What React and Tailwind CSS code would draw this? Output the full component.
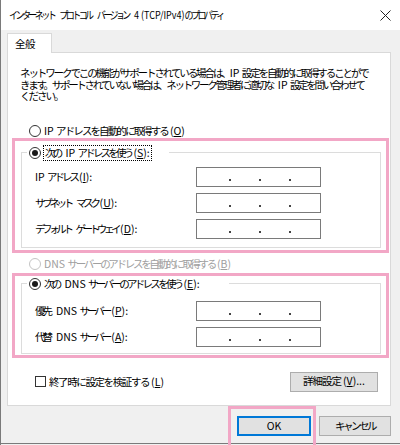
const FONT = "font-['Noto_Sans_CJK_JP','Noto_Sans',sans-serif]";

const Radio = ({ checked, disabled }) => (
  <span
    className={`w-[12px] h-[12px] rounded-full border bg-white flex items-center justify-center shrink-0 ${
      disabled ? 'border-[#c4c4c4]' : 'border-[#333333]'
    }`}
  >
    {checked && <span className="w-[6px] h-[6px] rounded-full bg-[#1a1a1a]" />}
  </span>
);

// latin runs (words, access keys) keep normal spacing
const L = ({ children }) => <span className="tracking-normal">{children}</span>;
// a space after a tightened CJK character
const Sp = ({ w = 'w-[5px]' }) => <span className={`inline-block ${w}`} />;
// access key in parentheses, underlined
const K = ({ k, colon }) => (
  <span className="tracking-normal ml-[2px]">
    (<span className="underline underline-offset-1">{k}</span>){colon ? ':' : ''}
  </span>
);

const IpBox = () => (
  <div className="w-[125px] h-[20px] bg-white border border-[#7a7a7a] flex items-start pt-[11px] pl-[32px] gap-[28px]">
    <span className="w-[2px] h-[2px] bg-[#444444]" />
    <span className="w-[2px] h-[2px] bg-[#444444]" />
    <span className="w-[2px] h-[2px] bg-[#444444]" />
  </div>
);

const Row = ({ label, track }) => (
  <div className="flex items-center h-[20px]">
    <div className={`w-[174px] pl-[13px] whitespace-nowrap ${track}`}>{label}</div>
    <IpBox />
  </div>
);

const Btn = ({ children, primary, className }) => (
  <button
    className={`h-[20px] bg-[#e1e1e1] border flex items-center justify-center leading-none ${
      primary ? 'border-[#0078d7] shadow-[inset_0_0_0_1px_#0078d7]' : 'border-[#adadad]'
    } ${className}`}
  >
    {children}
  </button>
);

export default function App() {
  return (
    <div className={`w-[400px] h-[445px] bg-[#f0f0f0] border-l border-[#7a7a7a] flex flex-col text-black text-[10.5px] ${FONT}`}>
      {/* title bar */}
      <div className="h-[30px] bg-white flex items-center justify-between pl-[8px] pr-[9px] shrink-0">
        <span className="inline-block whitespace-nowrap tracking-[-3px] origin-left scale-x-[0.86]">
          インターネット<Sp w="w-[6px]" />プロトコル<Sp w="w-[6px]" />バージョン<Sp w="w-[6px]" />
          <L>4 (TCP/IPv4)</L>のプロパティ
        </span>
        <svg width="11" height="11" viewBox="0 0 11 11" className="text-[#222]">
          <path d="M0.5 0.5 L10.5 10.5 M10.5 0.5 L0.5 10.5" stroke="currentColor" strokeWidth="1" />
        </svg>
      </div>

      {/* body */}
      <div className="pl-[6px] pt-[3px] flex flex-col">
        <div className="relative z-10 -mb-px w-[45px] h-[20px] bg-white border border-b-0 border-[#d9d9d9] pl-[7px] flex items-center tracking-[-0.5px]">
          全般
        </div>
        <div className="w-[384px] h-[354px] bg-white border border-[#d9d9d9] flex flex-col">
          <div className="pl-[12px] pt-[14px] leading-[11.5px] whitespace-nowrap">
            <div className="tracking-[-2.1px]">
              ネットワークでこの機能がサポートされている場合は、<L>IP </L>設定を自動的に取得することがで
            </div>
            <div className="tracking-[-2.3px]">
              きます。サポートされていない場合は、ネットワーク管理者に適切な<Sp />
              <L>IP </L>設定を問い合わせて
            </div>
            <div className="tracking-[-2px]">ください。</div>
          </div>

          <div className="mt-[22px] pl-[21px] h-[14px] flex items-center gap-[3px]">
            <Radio />
            <span className="tracking-[-1.9px]">
              <L>IP </L>アドレスを自動的に取得する<K k="O" />
            </span>
          </div>

          <div className="ml-[4px] w-[377px] h-[115px] border-[3px] border-[#f2a7c6]">
            <fieldset className="ml-[6px] mt-[4px] w-[360px] border border-[#dcdcdc] pt-[6px] pb-[8px] flex flex-col gap-[6px]">
              <legend className="ml-[5px] pl-[2px] pr-[17px] h-[16px] bg-white">
                <span className="flex items-center h-[16px] gap-[2px]">
                  <Radio checked />
                  <span className="border border-dotted border-black px-[1px] h-[16px] flex items-center tracking-[-2.8px]">
                    <span>
                      次の<Sp />
                      <L>IP </L>アドレスを使う<K k="S" colon />
                    </span>
                  </span>
                </span>
              </legend>
              <Row track="tracking-[-3px]" label={<><L>IP </L>アドレス<K k="I" colon /></>} />
              <Row track="tracking-[-3.3px]" label={<>サブネット<Sp />マスク<K k="U" colon /></>} />
              <Row track="tracking-[-3.4px]" label={<>デフォルト<Sp />ゲートウェイ<K k="D" colon /></>} />
            </fieldset>
          </div>

          <div className="mt-[4px] pl-[21px] h-[14px] flex items-center gap-[3px] text-[#a0a0a0]">
            <Radio disabled />
            <span className="tracking-[-2.3px]">
              <L>DNS </L>サーバーのアドレスを自動的に取得する<K k="B" />
            </span>
          </div>

          <div className="mt-[2px] ml-[4px] w-[377px] h-[85px] border-[3px] border-[#f2a7c6]">
            <fieldset className="ml-[6px] w-[360px] border border-[#dcdcdc] pt-[9px] pb-[6px] flex flex-col gap-[6px]">
              <legend className="ml-[5px] pl-[2px] pr-[29px] h-[16px] bg-white">
                <span className="flex items-center h-[16px] gap-[3px]">
                  <Radio checked />
                  <span className="tracking-[-2.7px]">
                    次の<Sp />
                    <L>DNS </L>サーバーのアドレスを使う<K k="E" colon />
                  </span>
                </span>
              </legend>
              <Row track="tracking-[-3px]" label={<>優先<Sp w="w-[6px]" /><L>DNS </L>サーバー<K k="P" colon /></>} />
              <Row track="tracking-[-3px]" label={<>代替<Sp w="w-[6px]" /><L>DNS </L>サーバー<K k="A" colon /></>} />
            </fieldset>
          </div>

          <div className="mt-[14px] pl-[27px] pr-[12px] h-[20px] flex items-center justify-between">
            <div className="flex items-center gap-[3px]">
              <span className="w-[11px] h-[11px] border border-[#333333] bg-white" />
              <span className="tracking-[-1.4px]">
                終了時に設定を検証する<K k="L" />
              </span>
            </div>
            <Btn className="w-[88px] tracking-[-1px]">
              詳細設定<K k="V" />
              <L>...</L>
            </Btn>
          </div>
        </div>
      </div>

      {/* buttons */}
      <div className="h-[38px] border-b border-[#7a7a7a] flex items-start justify-end pr-[9px] gap-[3px]">
        <div className="relative z-10 w-[88px] h-[39px] border-[3px] border-b-0 border-[#f2a7c6] pl-[6px] pt-[7px]">
          <Btn primary className="w-[74px]">
            OK
          </Btn>
        </div>
        <Btn className="w-[72px] mt-[10px] tracking-[-2.5px]">キャンセル</Btn>
      </div>
    </div>
  );
}
